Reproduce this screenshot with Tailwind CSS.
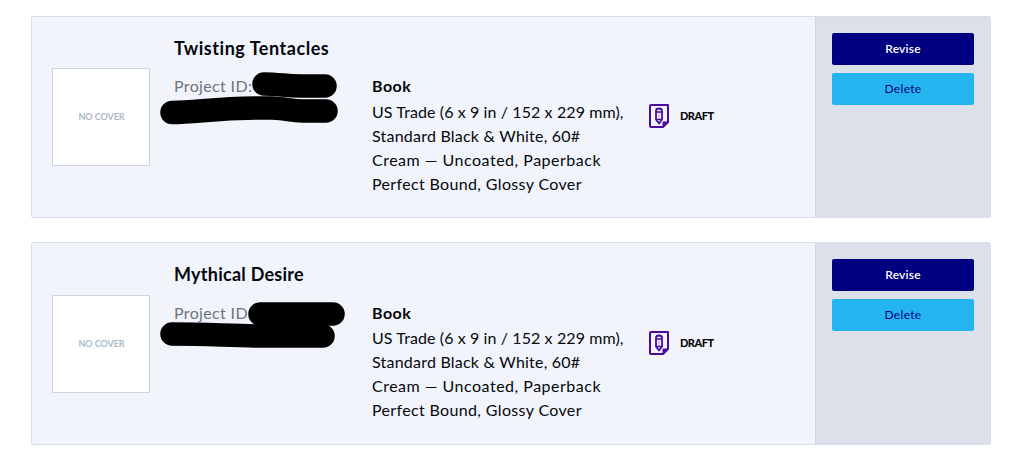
<!DOCTYPE html>
<html lang="en">
<head>
  <meta charset="UTF-8" />
  <title>My Projects</title>
  <meta name="viewport" content="width=device-width, initial-scale=1.0">
  <script src="https://cdn.jsdelivr.net/npm/@tailwindcss/browser@4"></script>
</head>
<body class="bg-white text-[#05080c] font-['Lato',sans-serif]">

  <main class="flex flex-col gap-6 pt-[15.9px] pl-[31px] w-[991px]">

    <!-- Project: Twisting Tentacles -->
    <section class="relative flex h-[202.5px] rounded-xs border border-[#d8deea] bg-[#f1f4fb]">
      <div class="ml-5 mt-[51px] flex size-[98px] shrink-0 items-center justify-center border border-[#cdd3e2] bg-white pl-px text-[9px] font-bold tracking-[-0.05px] text-[#a9bac6]">NO COVER</div>

      <div class="ml-6 w-[198px] shrink-0 pt-[19px]">
        <h2 class="text-lg leading-6 font-bold whitespace-nowrap tracking-[0.53px]">Twisting Tentacles</h2>
        <p class="mt-[14px] text-base leading-6 text-[#6d7583] tracking-[0.35px]">Project ID:</p>
      </div>

      <div class="w-[277px] shrink-0 pt-[57px] text-base leading-6 whitespace-nowrap">
        <h3 class="mb-0.5 font-bold tracking-[0.5px]">Book</h3>
        <p class="tracking-[0.1px]">US Trade (6 x 9 in / 152 x 229 mm),</p>
        <p class="tracking-[0.22px]">Standard Black &amp; White, 60#</p>
        <p class="tracking-[0.5px]">Cream — Uncoated, Paperback</p>
        <p class="tracking-[0.35px]">Perfect Bound, Glossy Cover</p>
      </div>

      <div class="flex h-6 items-center gap-[10px] mt-[87px]">
        <svg class="h-6 w-[21px]" viewBox="0 0 21 24" fill="none" stroke="#4b0a9e" stroke-width="2" stroke-linejoin="round">
          <path d="M2 1H19V18L14 23H2Q1 23 1 22V2Q1 1 2 1Z" />
          <path d="M19 18H14V23Z" fill="#4b0a9e" stroke-width="1" />
          <path d="M7 7Q7 4.500 10 4.500Q13 4.500 13 7V15.500L10 19.500L7 15.500Z" stroke-width="1.800" />
          <path d="M7 8H13M7 15.500H13" stroke-width="1.500" />
          <path d="M10 9V15" stroke-width="1" stroke-opacity="0.35" />
        </svg>
        <span class="text-[11px] font-black tracking-[-0.5px]">DRAFT</span>
      </div>

      <div class="ml-auto flex w-[175px] flex-col gap-2 border-l border-[#cfd5e3] bg-[#dce0ea] px-4 pt-4 text-xs">
        <button class="h-8 rounded-xs bg-[#000080] font-semibold tracking-[0.2px] text-white">Revise</button>
        <button class="h-8 rounded-xs bg-[#24b5f1] tracking-[0.3px] text-[#000080]">Delete</button>
      </div>

      <!-- Marker strokes over the ID -->
      <svg class="absolute left-[128px] top-[54px] h-[56px] w-[190px]" viewBox="0 0 190 56" fill="none" stroke="#000" stroke-width="23.500" stroke-linecap="round">
        <path d="M104 13C120 13 128 15.500 144 15H165" />
        <path d="M12 41.500C40 41 60 36.500 112 37C130 37.500 130 40.500 145 40H166" />
      </svg>
    </section>

    <!-- Project: Mythical Desire -->
    <section class="relative flex h-[202.5px] rounded-xs border border-[#d8deea] bg-[#f1f4fb]">
      <div class="ml-5 mt-[51.500px] flex size-[98px] shrink-0 items-center justify-center border border-[#cdd3e2] bg-white pl-px text-[9px] font-bold tracking-[-0.05px] text-[#a9bac6]">NO COVER</div>

      <div class="ml-6 w-[198px] shrink-0 pt-[19px]">
        <h2 class="text-lg leading-6 font-bold whitespace-nowrap tracking-[0.25px]">Mythical Desire</h2>
        <p class="mt-[14.500px] text-base leading-6 text-[#6d7583] tracking-[0.35px]">Project ID:</p>
      </div>

      <div class="w-[277px] shrink-0 pt-[57.500px] text-base leading-6 whitespace-nowrap">
        <h3 class="mb-[1.500px] font-bold tracking-[0.5px]">Book</h3>
        <p class="tracking-[0.1px]">US Trade (6 x 9 in / 152 x 229 mm),</p>
        <p class="tracking-[0.22px]">Standard Black &amp; White, 60#</p>
        <p class="tracking-[0.5px]">Cream — Uncoated, Paperback</p>
        <p class="tracking-[0.35px]">Perfect Bound, Glossy Cover</p>
      </div>

      <div class="flex h-6 items-center gap-[10px] mt-[87.500px]">
        <svg class="h-6 w-[21px]" viewBox="0 0 21 24" fill="none" stroke="#4b0a9e" stroke-width="2" stroke-linejoin="round">
          <path d="M2 1H19V18L14 23H2Q1 23 1 22V2Q1 1 2 1Z" />
          <path d="M19 18H14V23Z" fill="#4b0a9e" stroke-width="1" />
          <path d="M7 7Q7 4.500 10 4.500Q13 4.500 13 7V15.500L10 19.500L7 15.500Z" stroke-width="1.800" />
          <path d="M7 8H13M7 15.500H13" stroke-width="1.500" />
          <path d="M10 9V15" stroke-width="1" stroke-opacity="0.35" />
        </svg>
        <span class="text-[11px] font-black tracking-[-0.5px]">DRAFT</span>
      </div>

      <div class="ml-auto flex w-[175px] flex-col gap-2 border-l border-[#cfd5e3] bg-[#dce0ea] px-4 pt-4 text-xs">
        <button class="h-8 rounded-xs bg-[#000080] font-semibold tracking-[0.2px] text-white">Revise</button>
        <button class="h-8 rounded-xs bg-[#24b5f1] tracking-[0.3px] text-[#000080]">Delete</button>
      </div>

      <!-- Marker strokes over the ID -->
      <svg class="absolute left-[128px] top-[54px] h-[56px] w-[190px]" viewBox="0 0 190 56" fill="none" stroke="#000" stroke-width="23.500" stroke-linecap="round">
        <path d="M100 17H173" />
        <path d="M12 37C50 37 70 39 100 39H163" />
      </svg>
    </section>

  </main>
</body>
</html>
